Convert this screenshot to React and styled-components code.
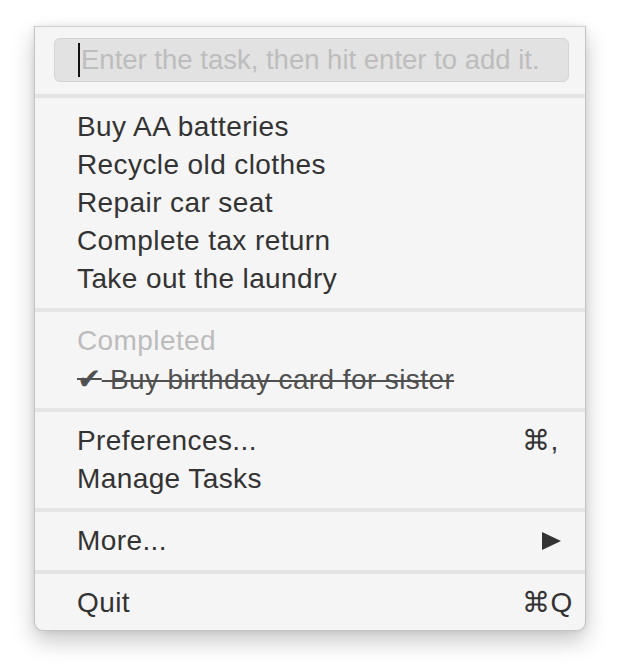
import React from "react"
import styled, { createGlobalStyle } from "styled-components"

const Global = createGlobalStyle`
  body {
    margin: 0;
    background: #fff;
    font-family: "Liberation Sans", Arial, sans-serif;
  }
`;

const Page = styled.div`
  padding: 26px 0 0 34px;
  height: 672px;
  box-sizing: border-box;
`;

const Menu = styled.div`
  width: 552px;
  box-sizing: border-box;
  background: #f5f5f5;
  border: 1px solid #c4c4c4;
  border-top-color: #d0d0d0;
  border-radius: 0 0 9px 9px;
  box-shadow: 0 10px 22px rgba(0, 0, 0, 0.22), 0 0 6px rgba(0, 0, 0, 0.08);
  overflow: hidden;
`;

const Section = styled.div`
  padding: ${p => p.$top ?? 10}px 0 ${p => p.$bottom ?? 10}px;
`;

const Separator = styled.div`
  height: 4px;
  background: #e4e4e4;
`;

const InputBox = styled.div`
  margin: 0 16px 0 19px;
  height: 44px;
  box-sizing: border-box;
  background: #e2e2e2;
  border: 1px solid #d4d4d4;
  border-radius: 6px;
  display: flex;
  align-items: center;
  padding-left: 23px;
  font-size: 27.5px;
  color: #bdbdbd;
  white-space: nowrap;
`;

const Caret = styled.span`
  display: inline-block;
  width: 2px;
  height: 34px;
  background: #111;
  margin-right: 1px;
`;

const Item = styled.div`
  display: flex;
  align-items: center;
  height: 38px;
  line-height: 38px;
  padding: 0 18px 0 42px;
  font-size: 28px;
  letter-spacing: 0.4px;
  color: ${p => (p.$muted ? "#bcbcbc" : "#333")};
  white-space: nowrap;
`;

const Label = styled.span`
  flex: 1;
  text-decoration: ${p => (p.$done ? "line-through" : "none")};
  text-decoration-thickness: 2px;
  color: ${p => (p.$done ? "#505050" : "inherit")};
`;

const Check = styled.span`
  font-family: "DejaVu Sans", sans-serif;
  font-size: 29px;
  font-weight: bold;
`;

const Shortcut = styled.span`
  width: 45px;
  color: #333;
`;

const Arrow = styled.svg`
  width: 19px;
  height: 18px;
  margin-right: 6px;
  fill: #333;
`;

const tasks = [
  "Buy AA batteries",
  "Recycle old clothes",
  "Repair car seat",
  "Complete tax return",
  "Take out the laundry",
];

const App = () => {
  return (
    <Page>
      <Global />
      <Menu>
        <Section $top={11} $bottom={12}>
          <InputBox>
            <Caret />
            Enter the task, then hit enter to add it.
          </InputBox>
        </Section>
        <Separator />
        <Section>
          {tasks.map((t, k) => (
            <Item key={k}><Label>{t}</Label></Item>
          ))}
        </Section>
        <Separator />
        <Section>
          <Item $muted><Label>Completed</Label></Item>
          <Item>
            <Label $done><Check>✔</Check> Buy birthday card for sister</Label>
          </Item>
        </Section>
        <Separator />
        <Section>
          <Item><Label>Preferences...</Label><Shortcut>⌘,</Shortcut></Item>
          <Item><Label>Manage Tasks</Label></Item>
        </Section>
        <Separator />
        <Section>
          <Item>
            <Label>More...</Label>
            <Arrow viewBox="0 0 19 18"><path d="M0 0 L19 9 L0 18 Z" /></Arrow>
          </Item>
        </Section>
        <Separator />
        <Section $bottom={8}>
          <Item><Label>Quit</Label><Shortcut>⌘Q</Shortcut></Item>
        </Section>
      </Menu>
    </Page>
  )
}

export default App;
